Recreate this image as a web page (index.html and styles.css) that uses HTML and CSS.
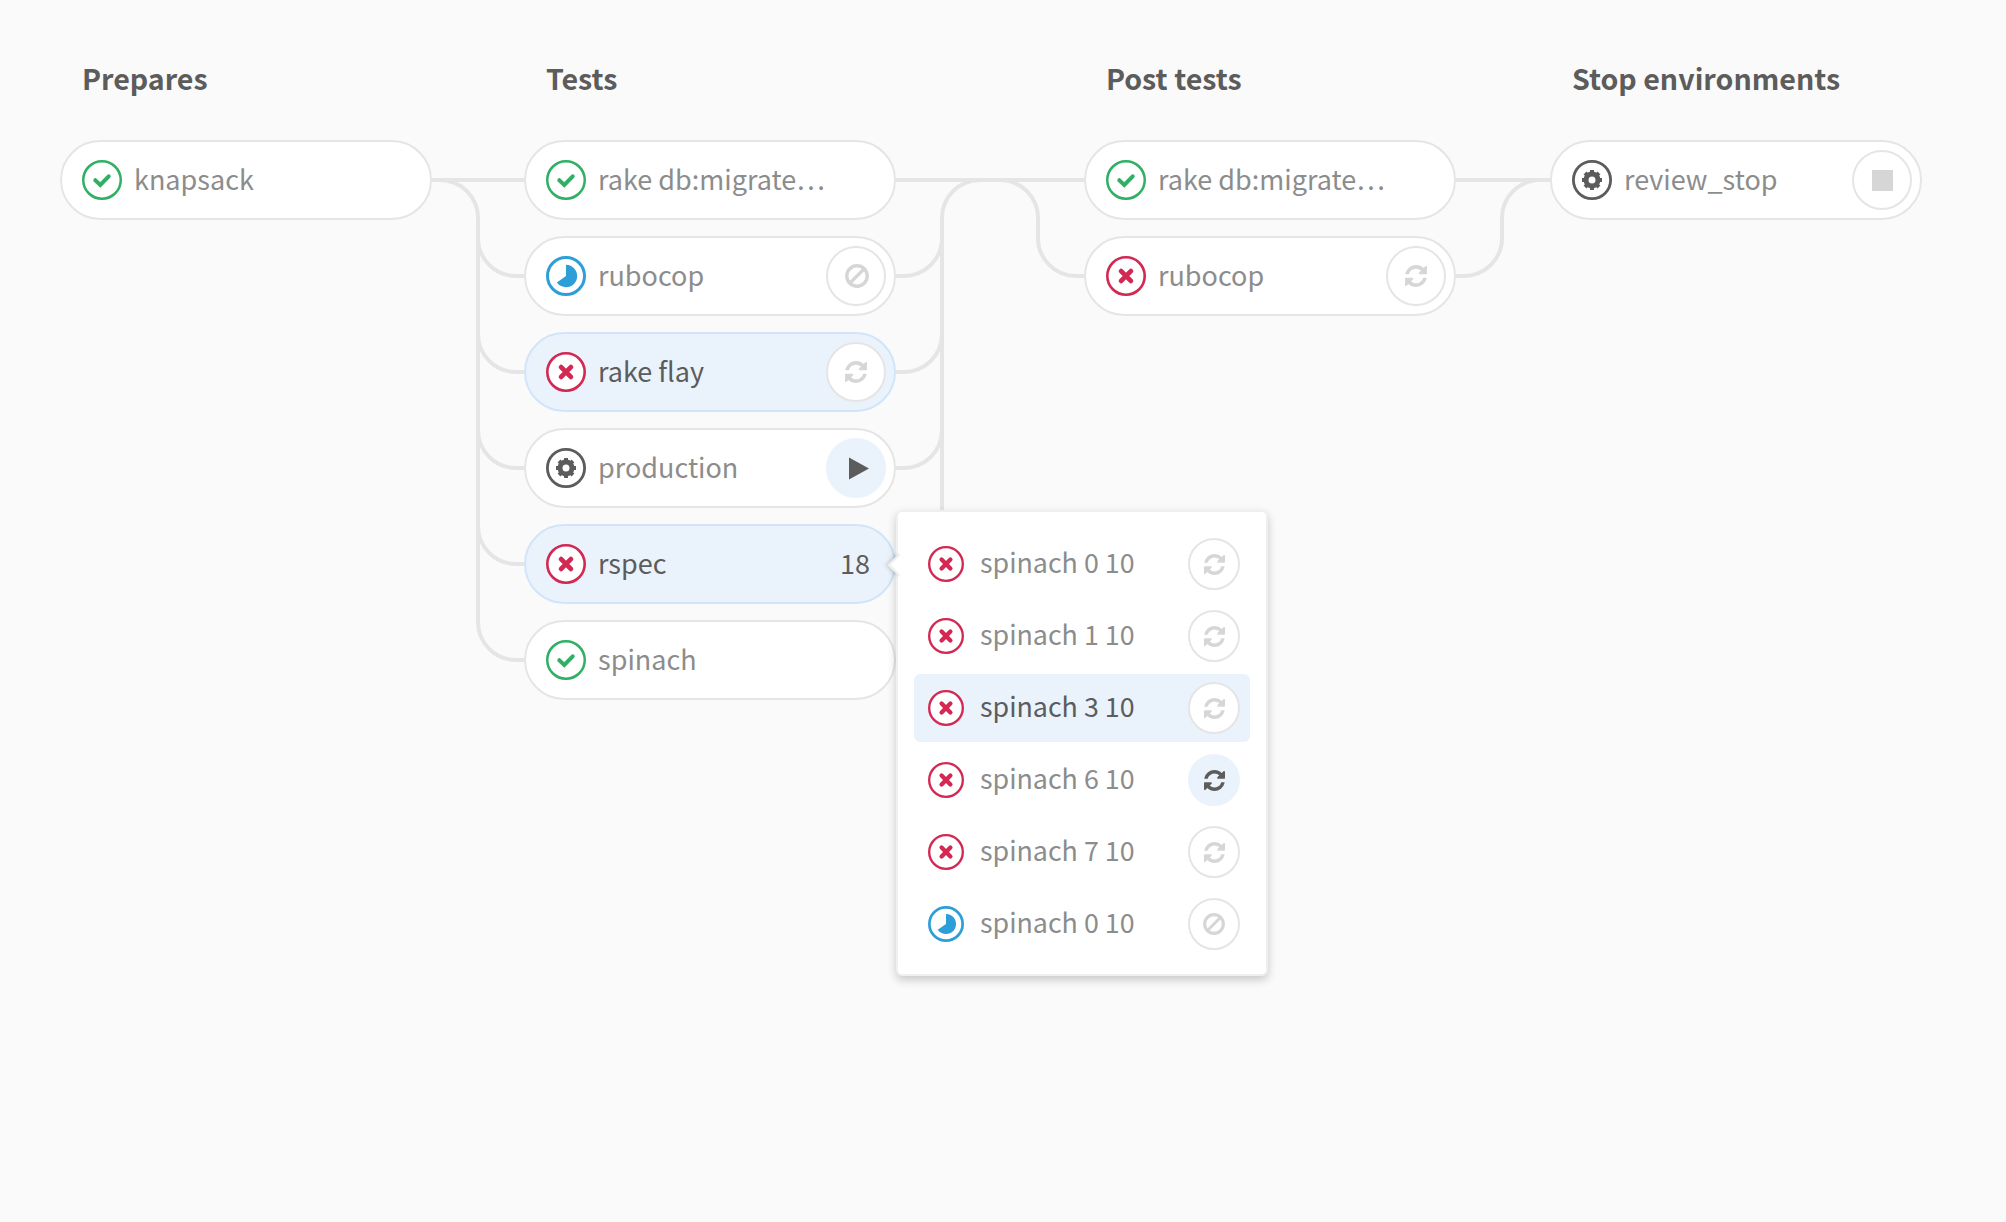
FILE: index.html
```html
<!DOCTYPE html>
<html lang="en">
<head>
<meta charset="utf-8">
<title>Pipeline</title>
<link rel="stylesheet" href="styles.css">
</head>
<body>
<svg class="sprite" aria-hidden="true">
  <symbol id="success" viewBox="0 0 40 40"><circle cx="20" cy="20" r="18.75" fill="#fff" stroke="currentColor" stroke-width="2.5"/><path d="M13.3 20.2l5 4.7 8.4-8.6" fill="none" stroke="currentColor" stroke-width="4" stroke-linejoin="miter" stroke-linecap="round"/></symbol>
  <symbol id="failed" viewBox="0 0 40 40"><circle cx="20" cy="20" r="18.7" fill="#fff" stroke="currentColor" stroke-width="2.6"/><path d="M15.1 15.1l9.8 9.8M24.900 15.100l-9.800 9.800" fill="none" stroke="currentColor" stroke-width="4.8" stroke-linecap="round"/></symbol>
  <symbol id="running" viewBox="0 0 40 40"><circle cx="20" cy="20" r="18.5" fill="#fff" stroke="currentColor" stroke-width="3"/><path d="M20 8.800A11.200 11.200 0 1 1 10.800 26.400L20 20z" fill="currentColor"/></symbol>
  <symbol id="manual" viewBox="0 0 40 40"><circle cx="20" cy="20" r="18.6" fill="#fff" stroke="currentColor" stroke-width="2.8"/><circle cx="20" cy="20" r="6" fill="none" stroke="currentColor" stroke-width="5"/><path d="M20 10v4M20 26v4M10 20h4M26 20h4M13 13l2.400 2.400M24.600 24.600L27 27M27 13l-2.400 2.400M15.400 24.600L13 27" stroke="currentColor" stroke-width="4"/></symbol>
  <symbol id="retry" viewBox="0 0 1536 1536"><path fill="currentColor" d="M1511 928q0 5-1 7-64 268-268 434.500T764 1536q-146 0-282.500-55T238 1324l-129 129q-19 19-45 19t-45-19-19-45V960q0-26 19-45t45-19h448q26 0 45 19t19 45-19 45l-137 137q71 66 161 102t187 36q134 0 250-65t186-179q11-17 53-117 8-23 30-23h192q13 0 22.500 9.500t9.500 22.500zm25-800v448q0 26-19 45t-45 19h-448q-26 0-45-19t-19-45 19-45l138-138Q969 256 768 256q-134 0-250 65T332 500q-11 17-53 117-8 23-30 23H50q-13 0-22.500-9.500T18 608v-7q65-268 270-434.500T768 0q146 0 284 55.500T1297 212l130-129q19-19 45-19t45 19 19 45z"/></symbol>
  <symbol id="cancel" viewBox="0 0 24 24"><circle cx="12" cy="12" r="10.200" fill="none" stroke="currentColor" stroke-width="3.400"/><path d="M19 5L5 19" stroke="currentColor" stroke-width="3.200"/></symbol>
  <symbol id="play" viewBox="0 0 20 22"><path d="M0 0l20 11L0 22z" fill="currentColor"/></symbol>
  <symbol id="stop" viewBox="0 0 20 20"><path d="M0 0h20v20H0z" fill="currentColor"/></symbol>
</svg>
<main class="pipeline">
  <section class="stage">
    <h2 class="stage-name">Prepares</h2>
    <div class="jobs">
      <div class="job"><svg class="status green"><use href="#success"/></svg><span class="name">knapsack</span></div>
    </div>
  </section>
  <svg class="links links-a" viewBox="0 0 92 560"><path d="M0 40H92M8 40A38 38 0 0 1 46 78V482A38 38 0 0 0 84 520H92M46 98A38 38 0 0 0 84 136H92M46 194A38 38 0 0 0 84 232H92M46 290A38 38 0 0 0 84 328H92M46 386A38 38 0 0 0 84 424H92"/></svg>
  <section class="stage">
    <h2 class="stage-name">Tests</h2>
    <div class="jobs">
      <div class="job"><svg class="status green"><use href="#success"/></svg><span class="name">rake db:migrate…</span></div>
      <div class="job"><svg class="status blue"><use href="#running"/></svg><span class="name">rubocop</span><span class="action"><svg class="glyph glyph-cancel"><use href="#cancel"/></svg></span></div>
      <div class="job active"><svg class="status red"><use href="#failed"/></svg><span class="name">rake flay</span><span class="action"><svg class="glyph"><use href="#retry"/></svg></span></div>
      <div class="job"><svg class="status dark"><use href="#manual"/></svg><span class="name">production</span><span class="action on"><svg class="glyph glyph-play"><use href="#play"/></svg></span></div>
      <div class="job active"><svg class="status red"><use href="#failed"/></svg><span class="name">rspec</span><span class="count">18</span>
        <div class="menu">
          <div class="item"><svg class="status red"><use href="#failed"/></svg><span class="name">spinach 0 10</span><span class="action"><svg class="glyph"><use href="#retry"/></svg></span></div>
          <div class="item"><svg class="status red"><use href="#failed"/></svg><span class="name">spinach 1 10</span><span class="action"><svg class="glyph"><use href="#retry"/></svg></span></div>
          <div class="item active"><svg class="status red"><use href="#failed"/></svg><span class="name">spinach 3 10</span><span class="action"><svg class="glyph"><use href="#retry"/></svg></span></div>
          <div class="item"><svg class="status red"><use href="#failed"/></svg><span class="name">spinach 6 10</span><span class="action on"><svg class="glyph"><use href="#retry"/></svg></span></div>
          <div class="item"><svg class="status red"><use href="#failed"/></svg><span class="name">spinach 7 10</span><span class="action"><svg class="glyph"><use href="#retry"/></svg></span></div>
          <div class="item"><svg class="status blue"><use href="#running"/></svg><span class="name">spinach 0 10</span><span class="action"><svg class="glyph glyph-cancel"><use href="#cancel"/></svg></span></div>
        </div>
      </div>
      <div class="job"><svg class="status green"><use href="#success"/></svg><span class="name">spinach</span></div>
    </div>
  </section>
  <svg class="links links-b" viewBox="0 0 188 560"><path d="M0 40H188M84 40A38 38 0 0 0 46 78V482A38 38 0 0 1 8 520M46 98A38 38 0 0 1 8 136H0M46 194A38 38 0 0 1 8 232H0M46 290A38 38 0 0 1 8 328H0M104 40A38 38 0 0 1 142 78V98A38 38 0 0 0 180 136H188"/></svg>
  <section class="stage">
    <h2 class="stage-name">Post tests</h2>
    <div class="jobs">
      <div class="job"><svg class="status green"><use href="#success"/></svg><span class="name">rake db:migrate…</span></div>
      <div class="job"><svg class="status red"><use href="#failed"/></svg><span class="name">rubocop</span><span class="action"><svg class="glyph"><use href="#retry"/></svg></span></div>
    </div>
  </section>
  <svg class="links links-c" viewBox="0 0 94 560"><path d="M0 40H94M84 40A38 38 0 0 0 46 78V98A38 38 0 0 1 8 136H0"/></svg>
  <section class="stage">
    <h2 class="stage-name">Stop environments</h2>
    <div class="jobs">
      <div class="job"><svg class="status dark"><use href="#manual"/></svg><span class="name">review_stop</span><span class="action"><svg class="glyph glyph-stop"><use href="#stop"/></svg></span></div>
    </div>
  </section>
</main>
</body>
</html>
```
FILE: styles.css
```css
* { box-sizing: border-box; }
body {
  margin: 0;
  min-height: 1222px;
  background: #fafafa;
  color: #8c8c8c;
  font-family: "Noto Sans CJK SC", "Open Sans", sans-serif;
  font-size: 27px;
  line-height: 40px;
}
.sprite { display: none; }
.pipeline { display: flex; align-items: flex-start; padding: 58px 0 0 60px; }
.stage { flex: none; width: 372px; }
.stage-name {
  margin: 0 0 42px;
  padding-left: 22px;
  color: #5c5c5c;
  font-size: 28.6px;
  font-weight: 700;
  line-height: 40px;
  white-space: nowrap;
}
.jobs { display: flex; flex-direction: column; gap: 16px; }
.job {
  position: relative;
  display: flex;
  align-items: center;
  height: 80px;
  padding: 0 8px 0 20px;
  background: #fff;
  border: 2px solid #e5e5e5;
  border-radius: 40px;
}
.active { background: #eaf2fc; border-color: #d0e5fa; color: #5c5c5c; }
.status { flex: none; width: 40px; height: 40px; }
.green { color: #31af64; }
.red { color: #d22852; }
.blue { color: #2d9fd8; }
.dark { color: #5c5c5c; }
.name { flex: 1; margin-left: 12px; padding-bottom: 2px; white-space: nowrap; }
.count { margin-right: 16px; padding-bottom: 2px; }
.action {
  flex: none;
  display: flex;
  align-items: center;
  justify-content: center;
  width: 60px;
  height: 60px;
  border: 2px solid #e5e5e5;
  border-radius: 50%;
  background: #fff;
  color: #d6d6d6;
}
.action.on { background: #eaf2fc; border-color: #eaf2fc; color: #5c5c5c; }
.glyph { width: 22px; height: 22px; }
.glyph-cancel { width: 24px; height: 24px; margin-left: 2px; }
.glyph-play { width: 20px; height: 23px; margin-left: 6px; }
.glyph-stop { width: 21px; height: 21px; }
.links { flex: none; height: 560px; margin-top: 82px; fill: none; stroke: #e5e5e5; stroke-width: 4; }
.links-a { width: 92px; }
.links-b { width: 188px; }
.links-c { width: 94px; }
.menu {
  position: absolute;
  z-index: 2;
  left: 370px;
  top: -16px;
  width: 372px;
  height: 466px;
  padding: 18px 16px 16px;
  display: flex;
  flex-direction: column;
  gap: 4px;
  background: #fff;
  border: 2px solid #efefef;
  border-radius: 6px;
  color: #8c8c8c;
  font-size: 26.8px;
  box-shadow: 0 4px 10px rgba(0, 0, 0, .2);
}
.menu::before {
  content: "";
  position: absolute;
  left: -7px;
  top: 45px;
  width: 14px;
  height: 14px;
  background: #fff;
  border: solid #efefef;
  border-width: 0 0 2px 2px;
  transform: rotate(45deg);
  box-shadow: -2px 2px 4px rgba(0, 0, 0, .12);
}
.item { display: flex; align-items: center; height: 68px; padding: 0 10px 0 14px; border-radius: 6px; }
.item .status { width: 36px; height: 36px; }
.item .name { margin-left: 16px; padding-bottom: 5px; }
.item .action { width: 52px; height: 52px; }
.item .glyph { width: 21px; height: 21px; }
.item .glyph-cancel { width: 22px; height: 22px; margin-left: 0; }
```
